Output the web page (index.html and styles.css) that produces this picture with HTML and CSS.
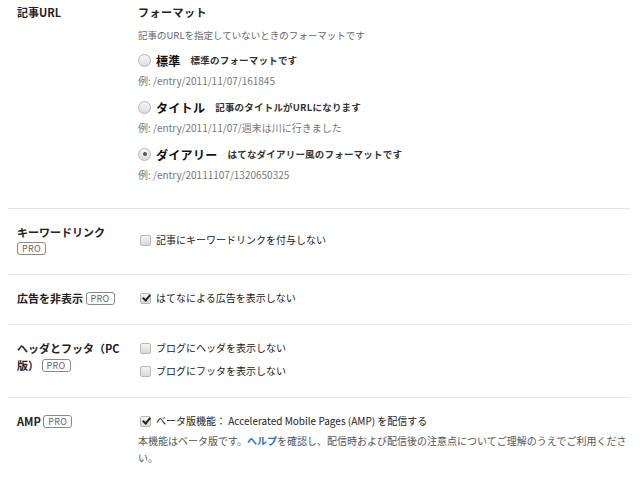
FILE: index.html
```html
<!DOCTYPE html>
<html lang="ja">
<head>
<meta charset="utf-8">
<link rel="stylesheet" href="styles.css">
</head>
<body>
<div class="settings">
  <div class="row first">
    <div class="label">記事URL</div>
    <div class="content">
      <div class="heading">フォーマット</div>
      <div class="desc">記事のURLを指定していないときのフォーマットです</div>
      <div class="option"><span class="radio"></span><span class="opt-name">標準</span><span class="opt-desc">標準のフォーマットです</span></div>
      <div class="example">例: /entry/2011/11/07/161845</div>
      <div class="option"><span class="radio"></span><span class="opt-name">タイトル</span><span class="opt-desc">記事のタイトルがURLになります</span></div>
      <div class="example">例: /entry/2011/11/07/週末は川に行きました</div>
      <div class="option"><span class="radio checked"></span><span class="opt-name">ダイアリー</span><span class="opt-desc">はてなダイアリー風のフォーマットです</span></div>
      <div class="example">例: /entry/20111107/1320650325</div>
    </div>
  </div>
  <div class="row">
    <div class="label">キーワードリンク <span class="pro">PRO</span></div>
    <div class="content">
      <div class="check-line center"><span class="check"></span>記事にキーワードリンクを付与しない</div>
    </div>
  </div>
  <div class="row">
    <div class="label">広告を非表示 <span class="pro">PRO</span></div>
    <div class="content">
      <div class="check-line"><span class="check checked"></span>はてなによる広告を表示しない</div>
    </div>
  </div>
  <div class="row">
    <div class="label tall">ヘッダとフッタ（PC版） <span class="pro">PRO</span></div>
    <div class="content">
      <div class="check-line"><span class="check"></span>ブログにヘッダを表示しない</div>
      <div class="check-line second"><span class="check"></span>ブログにフッタを表示しない</div>
    </div>
  </div>
  <div class="row last">
    <div class="label">AMP <span class="pro">PRO</span></div>
    <div class="content">
      <div class="check-line"><span class="check checked"></span>ベータ版機能： Accelerated Mobile Pages (AMP) を配信する</div>
      <div class="note">本機能はベータ版です。<a class="help">ヘルプ</a>を確認し、配信時および配信後の注意点についてご理解のうえでご利用ください。</div>
    </div>
  </div>
</div>
</body>
</html>
```

FILE: styles.css
```css
html, body {
  margin: 0;
  padding: 0;
  background: #ffffff;
}
body {
  font-family: "Noto Sans CJK JP", "Noto Sans", sans-serif;
  color: #333;
  width: 640px;
}
.settings {
  margin: 0 10px 0 8px;
}
.row {
  display: grid;
  grid-template-columns: 130px 1fr;
  padding: 15px 0 18px;
  border-bottom: 1px solid #e3e6e6;
}
.row.first {
  padding: 4px 0 26px;
}
.row.last {
  border-bottom: none;
}
.label {
  padding: 0 9px 0 9px;
  font-size: 11px;
  font-weight: bold;
  line-height: 16px;
  color: #222;
}
.label.tall {
  line-height: 17px;
}
.pro {
  display: inline-block;
  font-size: 9px;
  font-weight: normal;
  line-height: 11px;
  padding: 0 4px;
  border: 1px solid #8a8a8a;
  border-radius: 3px;
  color: #666;
  letter-spacing: 0.3px;
  vertical-align: 1px;
}
.heading {
  font-size: 11px;
  font-weight: bold;
  line-height: 16px;
  color: #222;
  letter-spacing: 0.5px;
}
.desc {
  font-size: 9.5px;
  line-height: 14px;
  color: #666;
  margin-top: 8px;
}
.option {
  display: flex;
  align-items: center;
  margin-top: 9px;
  height: 18px;
}
.radio {
  width: 11px;
  height: 11px;
  border-radius: 50%;
  border: 1px solid #b5b5b5;
  background: linear-gradient(#f6f6f6, #dcdcdc);
  margin-right: 5px;
  position: relative;
  flex: none;
}
.radio.checked::after {
  content: "";
  position: absolute;
  left: 3.5px;
  top: 3.5px;
  width: 4px;
  height: 4px;
  border-radius: 50%;
  background: #555;
}
.opt-name {
  font-size: 12px;
  font-weight: bold;
  color: #111;
  letter-spacing: 0.3px;
  margin-right: 10px;
}
.opt-desc {
  font-size: 9.5px;
  font-weight: bold;
  color: #333;
  letter-spacing: 0.2px;
}
.example {
  font-size: 10px;
  line-height: 14px;
  color: #777;
  margin-top: 5px;
}
.example + .option {
  margin-top: 10px;
}
.content {
  min-width: 0;
}
.check-line {
  display: flex;
  align-items: center;
  font-size: 10px;
  line-height: 16px;
  color: #222;
}
.check-line.center {
  margin-top: 8px;
}
.check-line.second {
  margin-top: 7px;
}
.check {
  width: 9px;
  height: 9px;
  border: 1px solid #b8b8b8;
  border-radius: 2px;
  background: linear-gradient(#f4f4f4, #d9d9d9);
  margin: 0 5px 0 2px;
  position: relative;
  flex: none;
}
.check.checked::after {
  content: "";
  position: absolute;
  left: 2.5px;
  top: -0.5px;
  width: 3px;
  height: 6px;
  border: solid #222;
  border-width: 0 2px 2px 0;
  transform: rotate(40deg);
}
.note {
  font-size: 10px;
  line-height: 17px;
  color: #555;
  margin-top: 3px;
}
.help {
  color: #2a72c2;
  font-weight: bold;
}
```
